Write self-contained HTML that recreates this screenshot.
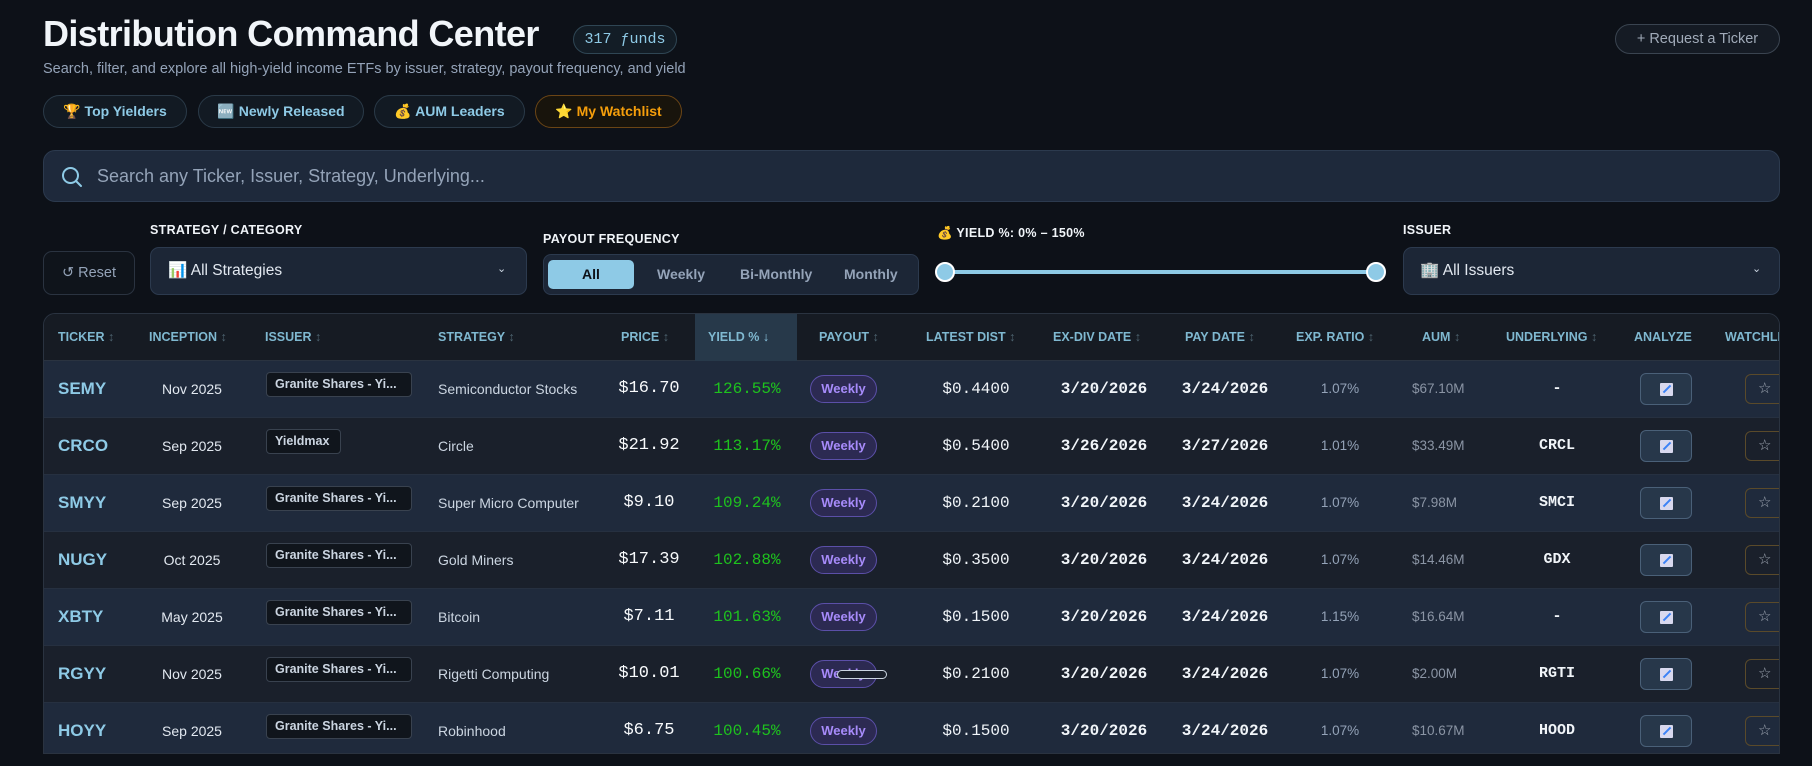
<!DOCTYPE html>
<html><head><meta charset="utf-8"><style>
*{box-sizing:border-box;margin:0;padding:0}
body{width:1812px;height:766px;overflow:hidden;background:#0d1118;font-family:"Liberation Sans",sans-serif;color:#e2e8f0;position:relative}
.a{position:absolute;white-space:nowrap}
.title{left:43px;top:13px;font-size:36px;font-weight:bold;color:#f1f5f9;letter-spacing:-0.6px}
.badge{left:573px;top:25px;width:104px;height:29px;border:1px solid #2f4654;border-radius:15px;background:#131d26;color:#8ecae6;font-family:"Liberation Mono",monospace;font-size:15px;line-height:27px;text-align:center}
.sub{left:43px;top:61px;font-size:14.5px;color:#94a3b8}
.pill{top:95px;height:33px;border:1px solid #2a3a48;border-radius:17px;background:#121a23;color:#8ecae6;font-weight:bold;font-size:14px;line-height:31px;text-align:center}
.req{left:1615px;top:24px;width:165px;height:30px;border:1px solid #3a4450;border-radius:15px;background:#151b24;color:#a0aab8;font-size:14.5px;line-height:28px;text-align:center}
.search{left:43px;top:150px;width:1737px;height:52px;background:#1e293b;border:1px solid #2c3a4e;border-radius:12px}
.lbl{font-size:12.5px;font-weight:bold;color:#f1f5f9;letter-spacing:.3px}
.box{background:#1c2636;border:1px solid #2c3a4e;border-radius:9px}
.tbl{left:43px;top:313px;width:1737px;height:441px;border:1px solid #2a3340;border-radius:12px 12px 0 0;overflow:hidden;background:#161b23}
.hd{position:absolute;top:0;left:0;width:1737px;height:47px;background:#161b23;border-bottom:1px solid #2a3340}
.h{position:absolute;top:16px;font-size:12.5px;font-weight:bold;color:#7fb8d0;white-space:nowrap}
.h i{font-style:normal;color:#4e6470;font-weight:normal}
.row{position:absolute;left:0;width:1737px;height:57px;border-bottom:1px solid #263040}
.c{position:absolute;white-space:nowrap;top:0;line-height:56px}
.tk{left:14px;font-weight:bold;font-size:17px;color:#8ecae6}
.inc{left:105px;width:86px;text-align:center;font-size:14px;color:#e2e8f0}
.iss{left:222px;top:11px;line-height:23px;height:25px;width:146px;padding-left:8px;background:#10151c;border:1px solid #39424f;border-radius:4px;font-size:12.5px;font-weight:bold;color:#cbd5e1}
.str{left:394px;font-size:14px;color:#cbd5e1}
.pr{left:560px;width:90px;text-align:center;font-family:"Liberation Mono",monospace;font-size:17px;color:#f8fafc}
.yl{left:653px;width:100px;text-align:center;font-family:"Liberation Mono",monospace;font-size:16px;color:#1ec21e}
.po{left:766px;top:14px;line-height:26px;height:28px;width:67px;text-align:center;background:#2c2a52;border:1px solid #5b4fa8;border-radius:14px;font-size:13px;font-weight:bold;color:#a78bfa}
.ld{left:882px;width:100px;text-align:center;font-family:"Liberation Mono",monospace;font-size:16px;color:#f1f5f9}
.ed{left:1010px;width:100px;text-align:center;font-family:"Liberation Mono",monospace;font-weight:bold;font-size:16px;color:#f1f5f9}
.pd{left:1131px;width:100px;text-align:center;font-family:"Liberation Mono",monospace;font-weight:bold;font-size:16px;color:#f1f5f9}
.er{left:1266px;width:60px;text-align:center;font-size:13.5px;color:#94a3b8}
.au{left:1368px;font-size:13.5px;color:#8b95a5}
.un{left:1463px;width:100px;text-align:center;font-family:"Liberation Mono",monospace;font-weight:bold;font-size:15px;color:#f1f5f9}
.an{left:1596px;top:12px;width:52px;height:32px;background:#27374a;border:1px solid #4a6078;border-radius:6px}
.an:after{content:"";position:absolute;left:19px;top:9px;width:13px;height:13px;background:#d8d8ee;border-radius:1px}
.an:before{content:"";position:absolute;left:21px;top:14px;width:10px;height:2px;background:#3b82f6;transform:rotate(-45deg);z-index:1}
.st{left:1701px;top:13px;width:40px;height:30px;border:1px solid #5a4a2a;border-radius:6px;color:#a0a8b4;font-size:15px;line-height:28px;padding-left:12px}
</style></head><body>
<div class="a title">Distribution Command Center</div>
<div class="a badge">317 ƒunds</div>
<div class="a req">+ Request a Ticker</div>
<div class="a sub">Search, filter, and explore all high-yield income ETFs by issuer, strategy, payout frequency, and yield</div>
<div class="a pill" style="left:43px;width:144px">🏆 Top Yielders</div>
<div class="a pill" style="left:198px;width:166px">🆕 Newly Released</div>
<div class="a pill" style="left:374px;width:151px">💰 AUM Leaders</div>
<div class="a pill" style="left:535px;width:147px;color:#f59e0b;border-color:#6b4515;background:#18140c">⭐ My Watchlist</div>
<div class="a search"></div>
<svg class="a" style="left:61px;top:166px" width="22" height="22" viewBox="0 0 22 22"><circle cx="9.5" cy="9.5" r="7.5" fill="none" stroke="#8ecae6" stroke-width="2"/><line x1="15" y1="15" x2="20" y2="20" stroke="#8ecae6" stroke-width="2" stroke-linecap="round"/></svg>
<div class="a" style="left:97px;top:166px;font-size:18px;color:#94a3b8">Search any Ticker, Issuer, Strategy, Underlying...</div>

<div class="a box" style="left:43px;top:251px;width:92px;height:44px;background:#0f141b;border-color:#2a3340;color:#94a3b8;font-size:14.5px;line-height:42px;text-align:center">↺ Reset</div>
<div class="a lbl" style="left:150px;top:223px">STRATEGY / CATEGORY</div>
<div class="a box" style="left:150px;top:247px;width:377px;height:48px"></div>
<div class="a" style="left:168px;top:261px;font-size:15.5px;color:#e2e8f0">📊 All Strategies</div>
<div class="a" style="left:497px;top:262px;font-size:11px;color:#cbd5e1">⌄</div>
<div class="a lbl" style="left:543px;top:232px">PAYOUT FREQUENCY</div>
<div class="a box" style="left:543px;top:254px;width:376px;height:41px;border-radius:8px"></div>
<div class="a" style="left:548px;top:260px;width:86px;height:29px;background:#8ecae6;border-radius:5px;color:#0d1118;font-weight:bold;font-size:14px;line-height:29px;text-align:center">All</div>
<div class="a" style="left:657px;top:266px;font-size:14px;color:#94a3b8;font-weight:bold">Weekly</div>
<div class="a" style="left:740px;top:266px;font-size:14px;color:#94a3b8;font-weight:bold">Bi-Monthly</div>
<div class="a" style="left:844px;top:266px;font-size:14px;color:#94a3b8;font-weight:bold">Monthly</div>
<div class="a lbl" style="left:937px;top:226px">💰 YIELD %: 0% – 150%</div>
<div class="a" style="left:944px;top:270px;width:433px;height:4px;background:#8ecae6"></div>
<div class="a" style="left:935px;top:262px;width:20px;height:20px;border-radius:50%;background:#8ecae6;border:2px solid #fff"></div>
<div class="a" style="left:1366px;top:262px;width:20px;height:20px;border-radius:50%;background:#8ecae6;border:2px solid #fff"></div>
<div class="a lbl" style="left:1403px;top:223px">ISSUER</div>
<div class="a box" style="left:1403px;top:247px;width:377px;height:48px"></div>
<div class="a" style="left:1420px;top:261px;font-size:15.5px;color:#e2e8f0">🏢 All Issuers</div>
<div class="a" style="left:1752px;top:262px;font-size:11px;color:#cbd5e1">⌄</div>

<div class="a tbl">
<div class="hd">
<div style="position:absolute;left:651px;top:0;width:102px;height:47px;background:#27394a"></div>
<div class="h" style="left:14px">TICKER <i>↕</i></div>
<div class="h" style="left:105px">INCEPTION <i>↕</i></div>
<div class="h" style="left:221px">ISSUER <i>↕</i></div>
<div class="h" style="left:394px">STRATEGY <i>↕</i></div>
<div class="h" style="left:577px">PRICE <i>↕</i></div>
<div class="h" style="left:664px">YIELD % <span style="color:#8ecae6">↓</span></div>
<div class="h" style="left:775px">PAYOUT <i>↕</i></div>
<div class="h" style="left:882px">LATEST DIST <i>↕</i></div>
<div class="h" style="left:1009px">EX-DIV DATE <i>↕</i></div>
<div class="h" style="left:1141px">PAY DATE <i>↕</i></div>
<div class="h" style="left:1252px">EXP. RATIO <i>↕</i></div>
<div class="h" style="left:1378px">AUM <i>↕</i></div>
<div class="h" style="left:1462px">UNDERLYING <i>↕</i></div>
<div class="h" style="left:1590px">ANALYZE</div>
<div class="h" style="left:1681px">WATCHLIST</div>
</div>

<div class="row" style="top:47px;background:#1f2a3c"><span class="c tk">SEMY</span><span class="c inc">Nov 2025</span><span class="c iss">Granite Shares - Yi...</span><span class="c str">Semiconductor Stocks</span><span class="c pr">$16.70</span><span class="c yl">126.55%</span><span class="c po">Weekly</span><span class="c ld">$0.4400</span><span class="c ed">3/20/2026</span><span class="c pd">3/24/2026</span><span class="c er">1.07%</span><span class="c au">$67.10M</span><span class="c un">-</span><span class="c an"></span><span class="c st">☆</span></div>
<div class="row" style="top:104px;background:#1a202b"><span class="c tk">CRCO</span><span class="c inc">Sep 2025</span><span class="c iss" style="width:75px">Yieldmax</span><span class="c str">Circle</span><span class="c pr">$21.92</span><span class="c yl">113.17%</span><span class="c po">Weekly</span><span class="c ld">$0.5400</span><span class="c ed">3/26/2026</span><span class="c pd">3/27/2026</span><span class="c er">1.01%</span><span class="c au">$33.49M</span><span class="c un">CRCL</span><span class="c an"></span><span class="c st">☆</span></div>
<div class="row" style="top:161px;background:#1f2a3c"><span class="c tk">SMYY</span><span class="c inc">Sep 2025</span><span class="c iss">Granite Shares - Yi...</span><span class="c str">Super Micro Computer</span><span class="c pr">$9.10</span><span class="c yl">109.24%</span><span class="c po">Weekly</span><span class="c ld">$0.2100</span><span class="c ed">3/20/2026</span><span class="c pd">3/24/2026</span><span class="c er">1.07%</span><span class="c au">$7.98M</span><span class="c un">SMCI</span><span class="c an"></span><span class="c st">☆</span></div>
<div class="row" style="top:218px;background:#1a202b"><span class="c tk">NUGY</span><span class="c inc">Oct 2025</span><span class="c iss">Granite Shares - Yi...</span><span class="c str">Gold Miners</span><span class="c pr">$17.39</span><span class="c yl">102.88%</span><span class="c po">Weekly</span><span class="c ld">$0.3500</span><span class="c ed">3/20/2026</span><span class="c pd">3/24/2026</span><span class="c er">1.07%</span><span class="c au">$14.46M</span><span class="c un">GDX</span><span class="c an"></span><span class="c st">☆</span></div>
<div class="row" style="top:275px;background:#1f2a3c"><span class="c tk">XBTY</span><span class="c inc">May 2025</span><span class="c iss">Granite Shares - Yi...</span><span class="c str">Bitcoin</span><span class="c pr">$7.11</span><span class="c yl">101.63%</span><span class="c po">Weekly</span><span class="c ld">$0.1500</span><span class="c ed">3/20/2026</span><span class="c pd">3/24/2026</span><span class="c er">1.15%</span><span class="c au">$16.64M</span><span class="c un">-</span><span class="c an"></span><span class="c st">☆</span></div>
<div class="row" style="top:332px;background:#1a202b"><span class="c tk">RGYY</span><span class="c inc">Nov 2025</span><span class="c iss">Granite Shares - Yi...</span><span class="c str">Rigetti Computing</span><span class="c pr">$10.01</span><span class="c yl">100.66%</span><span class="c po">Weekly</span><span class="c" style="left:793px;top:24px;width:50px;height:9px;border:1px solid #cbd5e1;border-radius:5px;background:#1a202b"></span><span class="c ld">$0.2100</span><span class="c ed">3/20/2026</span><span class="c pd">3/24/2026</span><span class="c er">1.07%</span><span class="c au">$2.00M</span><span class="c un">RGTI</span><span class="c an"></span><span class="c st">☆</span></div>
<div class="row" style="top:389px;background:#1f2a3c"><span class="c tk">HOYY</span><span class="c inc">Sep 2025</span><span class="c iss">Granite Shares - Yi...</span><span class="c str">Robinhood</span><span class="c pr">$6.75</span><span class="c yl">100.45%</span><span class="c po">Weekly</span><span class="c ld">$0.1500</span><span class="c ed">3/20/2026</span><span class="c pd">3/24/2026</span><span class="c er">1.07%</span><span class="c au">$10.67M</span><span class="c un">HOOD</span><span class="c an"></span><span class="c st">☆</span></div>
</div>
</body></html>
